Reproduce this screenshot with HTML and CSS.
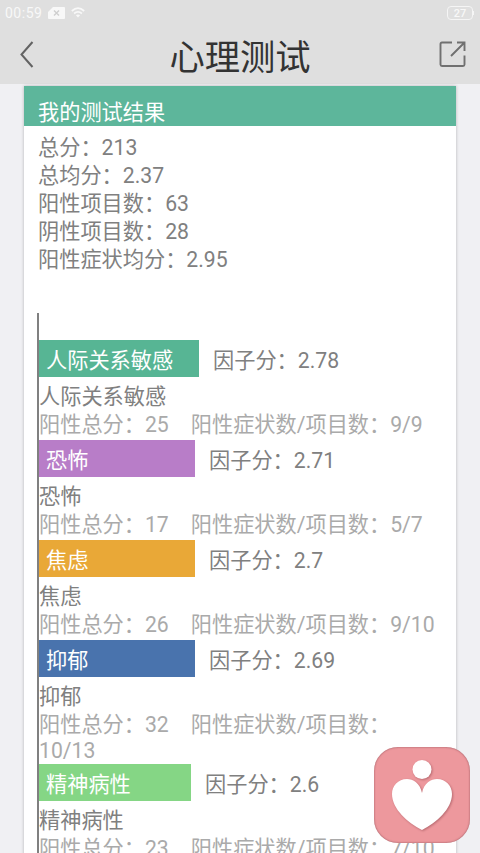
FILE: index.html
```html
<!DOCTYPE html>
<html lang="zh-CN">
<head>
  <meta charset="UTF-8" />
  <meta name="viewport" content="width=device-width, initial-scale=1.0" />
  <title>心理测试</title>
  <link rel="stylesheet" href="styles.css">
</head>
<body>
  <header class="header">
    <div class="status">
      <span class="time">00:59</span>
      <svg class="sim" width="17" height="12" viewBox="0 0 17 12">
        <path d="M5 0h11q1 0 1 1v10q0 1-1 1H1q-1 0-1-1V5z" fill="#f8f8f8" />
        <path d="M6 3.500l5 5M11 3.500l-5 5" stroke="#cfcfcf" stroke-width="1.400" />
      </svg>
      <svg class="wifi" width="14" height="11" viewBox="0 0 14 11" fill="none" stroke="#f8f8f8" stroke-width="1.700">
        <path d="M0.800 4Q7-1.600 13.200 4M3.100 6.500q3.900-3.300 7.800 0" />
        <path d="M7 10.600L4.900 8.300q2.100-1.600 4.200 0z" fill="#f8f8f8" stroke="none" />
      </svg>
      <span class="battery">27</span>
      <span class="battery-tip"></span>
    </div>
    <div class="nav">
      <svg width="14" height="27" viewBox="0 0 14 27" fill="none" stroke="#636363" stroke-width="2">
        <path d="M12.500 1L1.500 13.500 12.500 26" />
      </svg>
      <h1>心理测试</h1>
      <svg width="27" height="27" viewBox="0 0 27 27" fill="none" stroke="#707070" stroke-width="1.900">
        <path d="M13 1.500H3q-1.500 0-1.500 1.500v20.500q0 1.500 1.500 1.500h21q1.500 0 1.500-1.500V14.500" />
        <path d="M18 1.500h7.500V10M25 2L12 15" />
      </svg>
    </div>
  </header>

  <main class="card">
    <h2>我的测试结果</h2>
    <div class="summary">
      <p>总分：213</p>
      <p>总均分：2.37</p>
      <p>阳性项目数：63</p>
      <p>阴性项目数：28</p>
      <p>阳性症状均分：2.95</p>
    </div>

    <div class="chart">
      <section class="factor">
        <div class="row"><span class="bar green" style="width: 160px">人际关系敏感</span>因子分：2.78</div>
        <p>人际关系敏感</p>
        <p class="detail"><span>阳性总分：25</span><span>阳性症状数/项目数：9/9</span></p>
      </section>
      <section class="factor">
        <div class="row"><span class="bar purple" style="width: 156px">恐怖</span>因子分：2.71</div>
        <p>恐怖</p>
        <p class="detail"><span>阳性总分：17</span><span>阳性症状数/项目数：5/7</span></p>
      </section>
      <section class="factor">
        <div class="row"><span class="bar orange" style="width: 156px">焦虑</span>因子分：2.7</div>
        <p>焦虑</p>
        <p class="detail"><span>阳性总分：26</span><span>阳性症状数/项目数：9/10</span></p>
      </section>
      <section class="factor">
        <div class="row"><span class="bar blue" style="width: 156px">抑郁</span>因子分：2.69</div>
        <p>抑郁</p>
        <p class="detail"><span>阳性总分：32</span><span>阳性症状数/项目数：</span></p>
        <p class="detail wrapped">10/13</p>
      </section>
      <section class="factor">
        <div class="row"><span class="bar lime" style="width: 152px">精神病性</span>因子分：2.6</div>
        <p>精神病性</p>
        <p class="detail"><span>阳性总分：23</span><span>阳性症状数/项目数：7/10</span></p>
      </section>
    </div>
  </main>

  <div class="float-btn">
    <svg width="96" height="96" viewBox="0 0 96 96" fill="#fff">
      <circle cx="48" cy="22.500" r="9.500" />
      <path d="M48 46C46 36 39 32 33 32C24 32 18 39 18 47C18 62 34 76 48 83C62 76 78 62 78 47C78 39 72 32 63 32C57 32 50 36 48 46z" />
    </svg>
  </div>
</body>
</html>
```

FILE: styles.css
```css
* {
  box-sizing: border-box;
}

body {
  margin: 0;
  height: 853px;
  overflow: hidden;
  background: #f0f0f3;
  color: #808080;
  font-family: Roboto, "Noto Sans CJK SC", sans-serif;
  font-size: 21.2px;
  line-height: 28px;
}

h1, h2, p {
  margin: 0;
  font-weight: normal;
}

.header {
  height: 84px;
  background: #dfdfdf;
}

.status {
  display: flex;
  align-items: center;
  height: 25px;
  padding: 0 6px 0 5px;
  color: #f8f8f8;
}

.time {
  font-size: 14px;
  letter-spacing: 0.5px;
}

.sim {
  margin-left: 6px;
}

.wifi {
  margin-left: 6px;
}

.battery {
  width: 26px;
  height: 14px;
  margin-left: auto;
  border: 1px solid #f5f5f5;
  border-radius: 4px;
  font-size: 11px;
  font-weight: 500;
  line-height: 13px;
  text-align: center;
}

.battery-tip {
  width: 1px;
  height: 4px;
  background: #f5f5f5;
}

.nav {
  display: flex;
  align-items: center;
  justify-content: space-between;
  height: 58px;
  padding: 0 14px 0 20px;
}

.nav h1 {
  margin-left: 7px;
  padding-top: 7px;
  color: #333;
  font-size: 35.3px;
  line-height: 50px;
}

.card {
  width: 432px;
  height: 780px;
  margin: 2px auto 0;
  background: #fff;
  box-shadow: 0 0 3px rgba(0, 0, 0, 0.25);
}

.card h2 {
  height: 40px;
  padding: 13px 14px 0;
  background: #5db69b;
  color: #fff;
  font-size: 21.2px;
}

.summary {
  padding: 8px 14px 0;
}

.chart {
  height: 560px;
  margin: 39px 0 0 13px;
  padding-top: 27px;
  border-left: 2px solid #808080;
}

.row {
  display: flex;
  height: 37px;
  margin-bottom: 6px;
  line-height: 41px;
}

.factor {
  padding-bottom: 1px;
}

.bar {
  margin-right: 14px;
  padding-left: 7px;
  color: #fff;
}

.green {
  background: #57b594;
}

.purple {
  background: #b87dc8;
}

.orange {
  background: #e9a837;
}

.blue {
  background: #4973ad;
}

.lime {
  background: #85d685;
}

.detail {
  display: flex;
  gap: 22px;
  color: #aaa;
  white-space: nowrap;
}

.wrapped {
  line-height: 24px;
}

.float-btn {
  position: absolute;
  left: 374px;
  top: 747px;
  width: 96px;
  height: 96px;
  border-radius: 24px;
  background: #ed989d;
  box-shadow: inset 0 0 2px rgba(100, 40, 50, 0.7);
}

.float-btn svg {
  display: block;
  filter: drop-shadow(1px 1px 1px rgba(120, 50, 60, 0.45));
}
```
